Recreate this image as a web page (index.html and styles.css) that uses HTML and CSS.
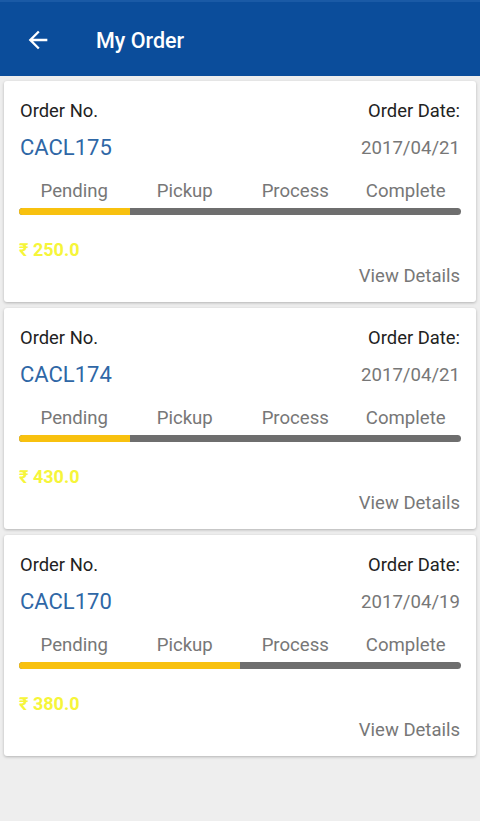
FILE: index.html
```html
<!DOCTYPE html>
<html lang="en">
<head>
<meta charset="UTF-8">
<meta name="viewport" content="width=device-width, initial-scale=1.0">
<title>My Order</title>
<link rel="stylesheet" href="styles.css">
</head>
<body>

<header class="toolbar">
  <svg class="back" width="24" height="24" viewBox="0 0 24 24">
    <path d="M20 11H7.83l5.59-5.59L12 4l-8 8 8 8 1.41-1.41L7.83 13H20v-2z" fill="#fff"/>
  </svg>
  <h1>My Order</h1>
</header>

<main class="order-list">

  <div class="order-card">
    <div class="row head">
      <span>Order No.</span>
      <span>Order Date:</span>
    </div>
    <div class="row">
      <span class="order-no">CACL175</span>
      <span class="order-date">2017/04/21</span>
    </div>
    <div class="stages">
      <span>Pending</span><span>Pickup</span><span>Process</span><span>Complete</span>
    </div>
    <div class="bar"><div class="fill" style="width: 25%"></div></div>
    <div class="price">₹ 250.0</div>
    <div class="details">View Details</div>
  </div>

  <div class="order-card">
    <div class="row head">
      <span>Order No.</span>
      <span>Order Date:</span>
    </div>
    <div class="row">
      <span class="order-no">CACL174</span>
      <span class="order-date">2017/04/21</span>
    </div>
    <div class="stages">
      <span>Pending</span><span>Pickup</span><span>Process</span><span>Complete</span>
    </div>
    <div class="bar"><div class="fill" style="width: 25%"></div></div>
    <div class="price">₹ 430.0</div>
    <div class="details">View Details</div>
  </div>

  <div class="order-card">
    <div class="row head">
      <span>Order No.</span>
      <span>Order Date:</span>
    </div>
    <div class="row">
      <span class="order-no">CACL170</span>
      <span class="order-date">2017/04/19</span>
    </div>
    <div class="stages">
      <span>Pending</span><span>Pickup</span><span>Process</span><span>Complete</span>
    </div>
    <div class="bar"><div class="fill" style="width: 50%"></div></div>
    <div class="price">₹ 380.0</div>
    <div class="details">View Details</div>
  </div>

</main>

</body>
</html>
```

FILE: styles.css
```css
body, html {
  margin: 0;
  padding: 0;
  font-family: Roboto, "Liberation Sans", Arial, sans-serif;
  background-color: #eeeeee;
}

.toolbar {
  display: flex;
  align-items: center;
  box-sizing: border-box;
  height: 76px;
  border-top: 2px solid #1a5aa6;
  background-color: #0b4d9b;
  padding: 2px 0 0 24px;
}

.back {
  width: 28px;
  height: 28px;
}

.toolbar h1 {
  margin: 0 0 0 44px;
  font-size: 21.5px;
  font-weight: 500;
  color: #ffffff;
}

.order-list {
  display: flex;
  flex-direction: column;
  gap: 6px;
  padding: 5px 4px;
}

.order-card {
  background-color: #ffffff;
  border-radius: 3px;
  box-shadow: 0 1px 3px rgba(0,0,0,0.25);
  padding: 19px 15px 15px 15px;
}

.row {
  display: flex;
  justify-content: space-between;
  align-items: center;
  margin-top: 13px;
  line-height: 26px;
}

.row.head {
  margin-top: 0;
  font-size: 18.4px;
  line-height: 22px;
  color: #222222;
  padding: 0 1px;
}

.order-no {
  font-size: 22px;
  color: #2f67a6;
  padding-left: 1px;
}

.order-date {
  font-size: 18.6px;
  color: #777777;
  padding-right: 1px;
}

.stages {
  display: grid;
  grid-template-columns: repeat(4, 1fr);
  margin-top: 19px;
  font-size: 18.6px;
  line-height: 22px;
  color: #777777;
  text-align: center;
}

.bar {
  margin-top: 6px;
  height: 7px;
  border-radius: 4px;
  background-color: #6e6e6e;
  overflow: hidden;
}

.bar .fill {
  height: 100%;
  background-color: #f8c10f;
}

.price {
  margin-top: 24px;
  font-size: 18px;
  font-weight: 700;
  line-height: 22px;
  color: #f6f53a;
}

.details {
  margin-top: 4px;
  font-size: 18.5px;
  line-height: 22px;
  color: #777777;
  text-align: right;
  padding-right: 1px;
}
```
